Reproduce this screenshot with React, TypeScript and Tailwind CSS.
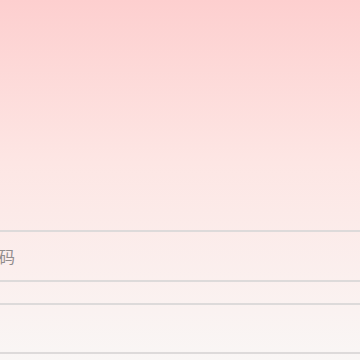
import React from 'react';

const Field = ({ label }: { label: string }) => (
  <div className="flex h-[52px] items-center border-y-2 border-[#dddada]">
    <span className="-ml-[17px] text-[16px] text-[#918c8c]">{label}</span>
  </div>
);

const App = () => {
  return (
    <div
      className="flex h-[360px] w-[360px] flex-col overflow-hidden bg-gradient-to-b from-[#fdcfcf] via-[#fde6e4] via-45% to-[#f9f6f5]"
      style={{ fontFamily: '"Noto Sans CJK SC", "Noto Sans", sans-serif' }}
    >
      <div className="h-[230px] shrink-0" />
      <Field label="密码" />
      <div className="h-[21px] shrink-0" />
      <div className="h-[51px] shrink-0 border-y-2 border-[#dddada]" />
    </div>
  );
};

export default App;
